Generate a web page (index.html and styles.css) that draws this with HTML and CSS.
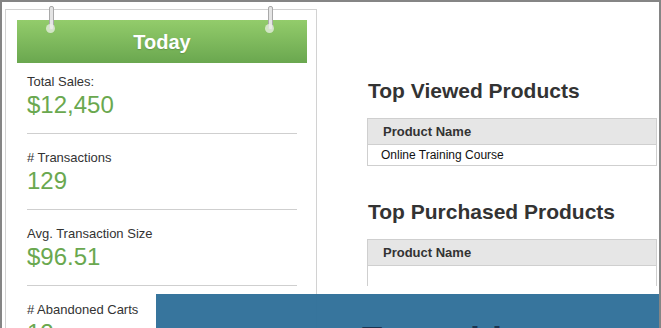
FILE: index.html
```html
<!DOCTYPE html>
<html lang="en">
<head>
    <meta charset="UTF-8" />
    <meta name="viewport" content="width=device-width, initial-scale=1" />
    <title>Store Dashboard</title>
    <link rel="stylesheet" href="styles.css">
</head>
<body>
    <div class="frame">
        <div class="today-card">
            <span class="ring ring-left"></span>
            <span class="ring ring-right"></span>
            <div class="today-header">Today</div>

            <div class="stat first">
                <div class="stat-label">Total Sales:</div>
                <div class="stat-value">$12,450</div>
            </div>
            <div class="stat">
                <div class="stat-label"># Transactions</div>
                <div class="stat-value">129</div>
            </div>
            <div class="stat">
                <div class="stat-label">Avg. Transaction Size</div>
                <div class="stat-value">$96.51</div>
            </div>
            <div class="stat">
                <div class="stat-label"># Abandoned Carts</div>
                <div class="stat-value">12</div>
            </div>
        </div>

        <div class="products">
            <h2>Top Viewed Products</h2>
            <table class="product-table">
                <tr><th>Product Name</th></tr>
                <tr><td>Online Training Course</td></tr>
            </table>

            <h2 class="second">Top Purchased Products</h2>
            <table class="product-table">
                <tr><th>Product Name</th></tr>
                <tr><td class="empty"></td></tr>
            </table>
        </div>

        <div class="banner">
            <div class="banner-title">Everything you need to build</div>
        </div>
    </div>
</body>
</html>
```

FILE: styles.css
```css
html, body {
    margin: 0;
    padding: 0;
    height: 100%;
}
body {
    font-family: 'Liberation Sans', Arial, sans-serif;
    background: #fff;
    color: #333;
}
.frame {
    position: relative;
    box-sizing: border-box;
    height: 328px;
    overflow: hidden;
    border: 2px solid #858585;
    border-bottom: none;
    display: flex;
    align-items: flex-start;
}
.today-card {
    position: relative;
    flex: 0 0 auto;
    width: 290px;
    margin: 7px 0 0 3px;
    padding: 10px 9px 40px 11px;
    border: 1px solid #d2d2d2;
}
.ring {
    position: absolute;
    top: -4px;
    width: 3px;
    height: 22px;
    background: #e4e4e4;
    border: 1px solid #a9a9a9;
    border-radius: 2px;
}
.ring::after {
    content: "";
    position: absolute;
    left: -4px;
    bottom: -4px;
    width: 9px;
    height: 9px;
    border-radius: 50%;
    background: rgba(235, 240, 230, 0.75);
}
.ring-left { left: 43px; }
.ring-right { left: 262px; }

.today-header {
    height: 43px;
    line-height: 45px;
    text-align: center;
    font-size: 20px;
    font-weight: bold;
    color: #fff;
    background: linear-gradient(#93cc6b, #6aa74f);
    text-shadow: 0 1px 1px rgba(60, 100, 40, 0.35);
}
.stat {
    margin: 0 10px;
    padding: 16px 0 15px;
    border-bottom: 1px solid #cfcfcf;
}
.stat.first {
    padding-top: 11px;
}
.stat-label {
    font-size: 13px;
    line-height: 16px;
    color: #333;
    margin-bottom: 2px;
}
.stat-value {
    font-size: 24px;
    line-height: 26px;
    color: #6aa84f;
}

.products {
    flex: 1 1 auto;
    margin: 77px 0 0 50px;
}
.products h2 {
    margin: 0 0 15px 1px;
    font-size: 21px;
    line-height: 24px;
    font-weight: bold;
    color: #333;
}
.products h2.second {
    margin-top: 34px;
}
.product-table {
    width: 290px;
    border-collapse: collapse;
}
.product-table th {
    height: 25px;
    padding: 0 0 0 15px;
    text-align: left;
    font-size: 13px;
    font-weight: bold;
    color: #333;
    background: #e6e6e6;
    border: 1px solid #cfcfcf;
}
.product-table td {
    height: 20px;
    padding: 0 0 0 13px;
    font-size: 12px;
    color: #111;
    border: 1px solid #cfcfcf;
}
.product-table td.empty {
    border-bottom: none;
}

.banner {
    position: absolute;
    left: 154px;
    top: 292px;
    right: 0;
    height: 70px;
    padding: 27px 0 0 204px;
    box-sizing: border-box;
    background: rgba(47, 111, 153, 0.96);
}
.banner-title {
    font-size: 36px;
    line-height: 40px;
    font-weight: bold;
    color: #1a3552;
    white-space: nowrap;
}
```
